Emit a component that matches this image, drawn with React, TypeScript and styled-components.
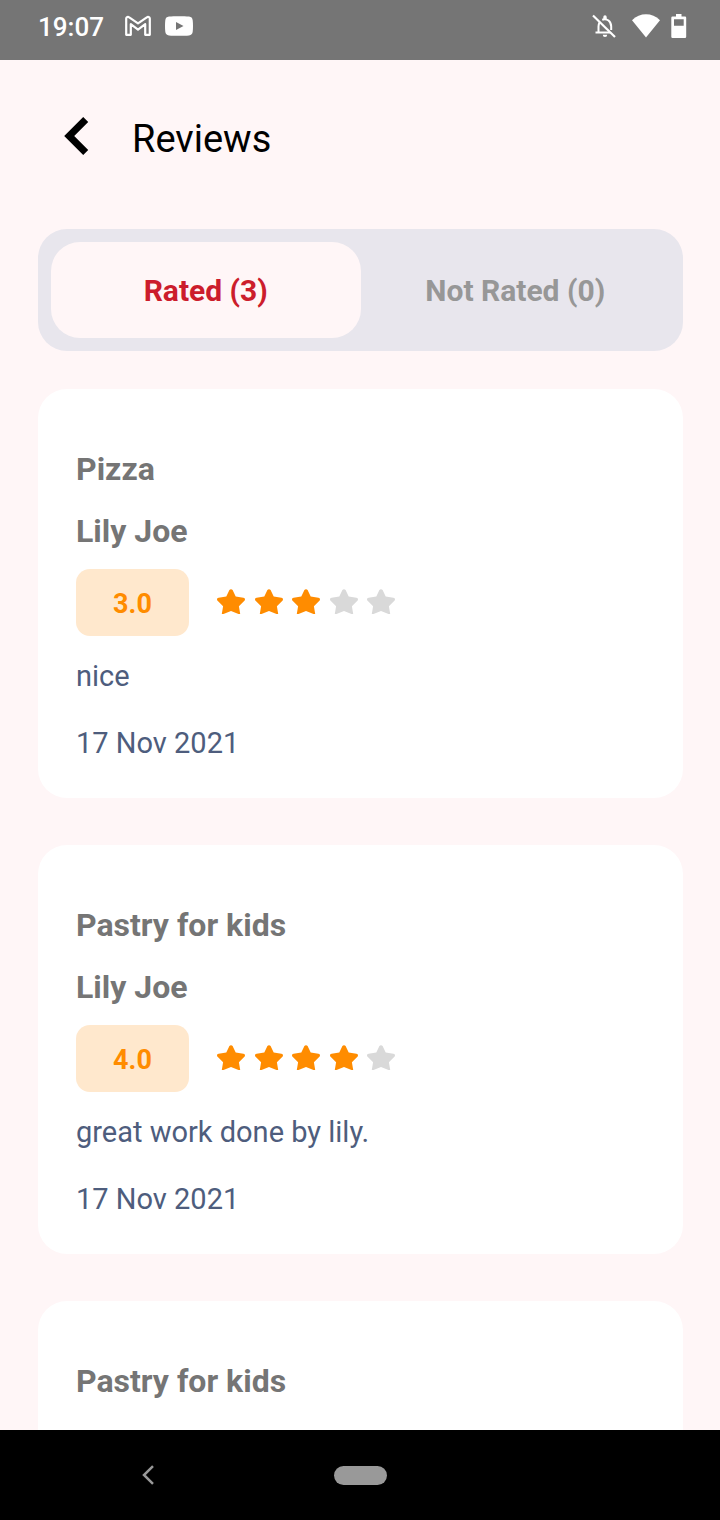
import React, { useState } from 'react';
import styled, { createGlobalStyle } from 'styled-components';

const GlobalStyle = createGlobalStyle`
  *, *::before, *::after { box-sizing: border-box; }
  body { margin: 0; background: #fff6f7; font-family: Roboto, sans-serif; }
  h1, h2, h3, p { margin: 0; }
  button { border: 0; padding: 0; background: none; font-family: inherit; cursor: pointer; }
  svg { display: block; flex: none; }
`;

const Screen = styled.div`
  display: flex;
  flex-direction: column;
  height: 100vh;
  background: #fff6f7;
`;

const StatusBar = styled.div`
  display: flex;
  flex: none;
  align-items: center;
  justify-content: space-between;
  height: 60px;
  padding: 0 33px 8px 38px;
  background: #757575;
  color: #fff;
`;

const StatusGroup = styled.div<{ $gap: number }>`
  display: flex;
  align-items: center;
  gap: ${({ $gap }) => $gap}px;
`;

const Clock = styled.time`
  margin-right: 7px;
  padding-top: 2px;
  font-size: 26px;
  font-weight: 500;
  line-height: 30px;
`;

const Header = styled.header`
  display: flex;
  flex: none;
  align-items: center;
  gap: 43px;
  padding: 56px 38px 67px 64px;
`;

const BackButton = styled.button`
  padding-bottom: 6px;
`;

const Title = styled.h1`
  color: #000;
  font-size: 38px;
  font-weight: 400;
  line-height: 46px;
`;

const Tabs = styled.div`
  display: flex;
  flex: none;
  margin: 0 37px 0 38px;
  padding: 13px;
  border-radius: 29px;
  background: #e8e6ed;
`;

const Tab = styled.button<{ $active: boolean }>`
  flex: 1;
  height: 96px;
  padding-top: 2px;
  border-radius: 29px;
  background: ${({ $active }) => ($active ? '#fff6f7' : 'transparent')};
  color: ${({ $active }) => ($active ? '#cc1d2c' : '#979797')};
  font-size: 30px;
  font-weight: 700;
  line-height: 36px;
`;

const List = styled.main`
  display: flex;
  flex: 1;
  flex-direction: column;
  gap: 47px;
  min-height: 0;
  margin-top: 38px;
  padding: 0 37px 0 38px;
  overflow-y: auto;
  scrollbar-width: none;
`;

const Card = styled.article`
  flex: none;
  min-height: 409px;
  padding: 61px 38px 38px;
  border-radius: 29px;
  background: #fff;
`;

const Heading = styled.h2`
  color: #757575;
  font-size: 32px;
  font-weight: 700;
  line-height: 38px;
`;

const Author = styled(Heading).attrs({ as: 'h3' })`
  margin-top: 24px;
`;

const RatingRow = styled.div`
  display: flex;
  align-items: center;
  gap: 28px;
  margin-top: 19px;
`;

const Score = styled.span`
  display: flex;
  align-items: center;
  justify-content: center;
  width: 113px;
  height: 67px;
  padding-top: 2px;
  border-radius: 14px;
  background: #ffe8cd;
  color: #ff8c00;
  font-size: 27px;
  font-weight: 700;
  line-height: 32px;
`;

const Stars = styled.div`
  display: flex;
  justify-content: space-between;
  width: 178px;
`;

const Comment = styled.p`
  margin-top: 23px;
  color: #4e5d7d;
  font-size: 29px;
  line-height: 34px;
`;

const ReviewDate = styled(Comment)`
  margin-top: 33px;
`;

const NavBar = styled.nav`
  display: grid;
  flex: none;
  grid-template-columns: repeat(3, 1fr);
  align-items: center;
  justify-items: center;
  height: 90px;
  padding: 0 42px;
  background: #000;
`;

const HomePill = styled.button`
  width: 53px;
  height: 19px;
  border-radius: 10px;
  background: #999;
`;

const MailIcon = () => (
  <svg width="28" height="22" viewBox="0 0 28 22" fill="none" stroke="#fff" strokeWidth="2.200" strokeLinejoin="round">
    <path d="M2.200 19.800V3.600C2.200 2 4 1.400 5.200 2.300L14 8.400l8.800-6.100C24 1.400 25.800 2 25.800 3.600v16.200h-4.600V9.200L14 14.600 6.800 9.200v10.600z" />
  </svg>
);

const VideoIcon = () => (
  <svg width="28" height="20" viewBox="0 0 28 20">
    <path fill="#fff" fillRule="evenodd" d="M4 .6C9 0 19 0 24 .6c2.300.3 3.400 1.400 3.700 3.600.4 3.600.4 8 0 11.600-.3 2.200-1.400 3.300-3.700 3.600-5 .6-15 .6-20 0C1.700 19.100.6 18 .3 15.800c-.4-3.600-.4-8 0-11.600C.6 2 1.700.9 4 .6zM11 6v8l7.500-4z" />
  </svg>
);

const BellOffIcon = () => (
  <svg width="31" height="28" viewBox="0 -1 31 28" fill="none" stroke="#fff" strokeWidth="2">
    <path d="M3 2.500l22 21.500" strokeWidth="2.200" />
    <path d="M9.500 9.500C8.900 10.600 8.500 12 8.500 13.500V19.500M5.500 19.500H20M12.200 6.700C17 4.800 21.200 8.500 21.200 13.500V17" />
    <path d="M13.300 6V4a1.700 1.700 0 013.400 0v2zM12.800 21.800h4.400a2.200 2.200 0 01-4.400 0z" fill="#fff" stroke="none" />
  </svg>
);

const WifiIcon = () => (
  <svg width="28" height="24" viewBox="0 0 28 24">
    <path fill="#fff" d="M0 6.200C8-1.700 20-1.700 28 6.200L14 23.500z" />
  </svg>
);

const BatteryIcon = () => (
  <svg width="16" height="25" viewBox="0 0 16 25">
    <path fill="#fff" fillRule="evenodd" d="M5 0h5.500v2.500H14A1.200 1.200 0 0115.200 3.700v19.100A1.200 1.200 0 0114 24H1.500A1.200 1.200 0 01.3 22.800V3.700A1.200 1.200 0 011.500 2.500H5zM3 5.200v6.600h9.700V5.200z" />
  </svg>
);

const BackIcon = () => (
  <svg width="25" height="38" viewBox="0 0 25 38">
    <path d="M19.200 0L24.200 5 10.200 19l14 14-5 5L.2 19z" />
  </svg>
);

const NavBackIcon = () => (
  <svg width="12" height="20" viewBox="0 0 12 20" fill="none" stroke="#999" strokeWidth="2.500">
    <path d="M11 1.200L2 10l9 8.800" />
  </svg>
);

const StarIcon = ({ filled }: { filled: boolean }) => (
  <svg width="28" height="27" viewBox="0 0 28 27" fill={filled ? '#ff8c00' : '#d9d9d9'}>
    <path d="M12.400 1.100c.7-1.300 2.500-1.300 3.200 0l3.100 6.500 7.700 1.200c1.600.3 2.100 1.900 1 3l-5.500 5.400 1.300 7.800H21.500L14 22l-7.500 3H4.800l1.300-7.800L.6 11.800c-1.100-1.100-.6-2.700 1-3l7.700-1.200z" />
  </svg>
);

type Review = {
  title: string;
  author?: string;
  rating?: number;
  comment?: string;
  date?: string;
};

const reviews: Review[] = [
  { title: 'Pizza', author: 'Lily Joe', rating: 3, comment: 'nice', date: '17 Nov 2021' },
  { title: 'Pastry for kids', author: 'Lily Joe', rating: 4, comment: 'great work done by lily.', date: '17 Nov 2021' },
  { title: 'Pastry for kids' },
];

const ReviewCard = ({ title, author, rating, comment, date }: Review) => (
  <Card>
    <Heading>{title}</Heading>
    {author && <Author>{author}</Author>}
    {rating !== undefined && (
      <RatingRow>
        <Score>{rating.toFixed(1)}</Score>
        <Stars role="img" aria-label={`${rating} out of 5 stars`}>
          {[1, 2, 3, 4, 5].map((n) => (
            <StarIcon key={n} filled={n <= rating} />
          ))}
        </Stars>
      </RatingRow>
    )}
    {comment && <Comment>{comment}</Comment>}
    {date && <ReviewDate>{date}</ReviewDate>}
  </Card>
);

export default function App() {
  const [tab, setTab] = useState<'rated' | 'notRated'>('rated');

  return (
    <>
      <GlobalStyle />
      <Screen>
        <StatusBar>
          <StatusGroup $gap={13}>
            <Clock>19:07</Clock>
            <MailIcon />
            <VideoIcon />
          </StatusGroup>
          <StatusGroup $gap={11}>
            <BellOffIcon />
            <WifiIcon />
            <BatteryIcon />
          </StatusGroup>
        </StatusBar>
        <Header>
          <BackButton aria-label="Go back">
            <BackIcon />
          </BackButton>
          <Title>Reviews</Title>
        </Header>
        <Tabs role="tablist">
          <Tab role="tab" aria-selected={tab === 'rated'} $active={tab === 'rated'} onClick={() => setTab('rated')}>
            Rated (3)
          </Tab>
          <Tab role="tab" aria-selected={tab === 'notRated'} $active={tab === 'notRated'} onClick={() => setTab('notRated')}>
            Not Rated (0)
          </Tab>
        </Tabs>
        <List>
          {tab === 'rated' && reviews.map((review, index) => <ReviewCard key={index} {...review} />)}
        </List>
        <NavBar aria-label="System navigation">
          <button aria-label="Back">
            <NavBackIcon />
          </button>
          <HomePill aria-label="Home" />
        </NavBar>
      </Screen>
    </>
  );
}
